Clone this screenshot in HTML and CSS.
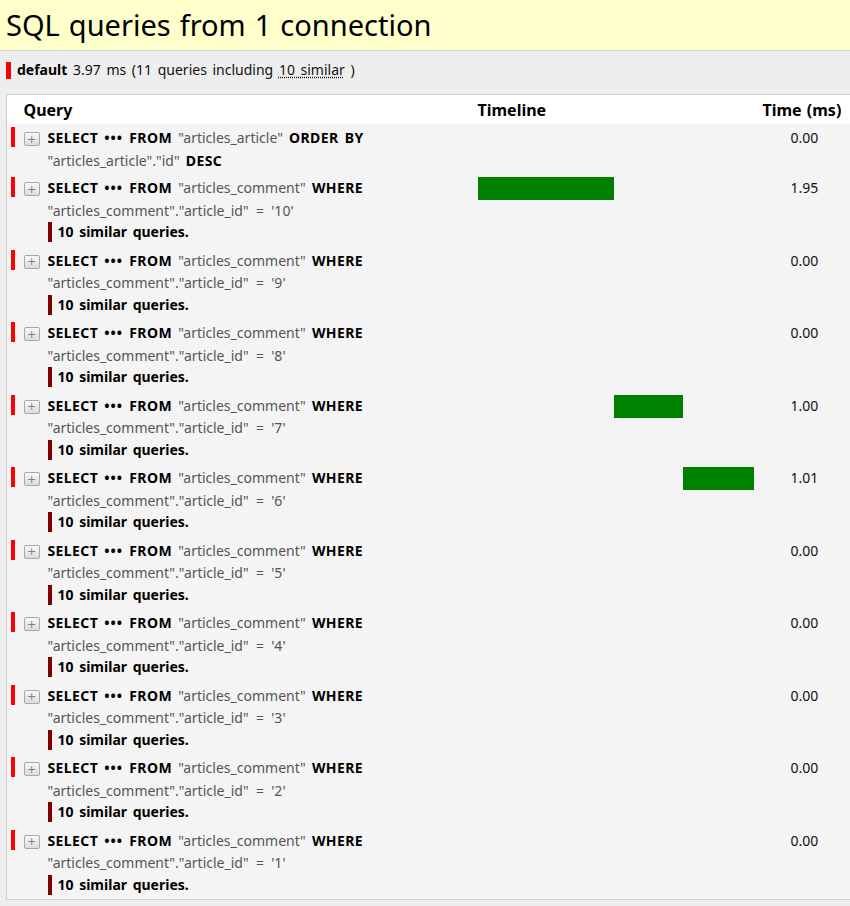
FILE: index.html
```html
<!DOCTYPE html>
<html lang="en">
<head>
<meta charset="utf-8">
<title>SQL queries</title>
<link rel="stylesheet" href="styles.css">
</head>
<body>
<div class="panel">
  <div class="panel-title">
    <h3>SQL queries from 1 connection</h3>
  </div>
  <div class="panel-content">
    <div class="conn"><span class="conn-swatch"></span><strong>default</strong> 3.97 ms (11 queries including <abbr title="Similar queries">10 similar</abbr> )</div>
    <table class="sql">
      <colgroup>
        <col class="c-color">
        <col class="c-toggle">
        <col class="c-query">
        <col class="c-timeline">
        <col class="c-time">
      </colgroup>
      <thead>
        <tr>
          <th></th>
          <th colspan="2" class="th-query">Query</th>
          <th class="th-timeline">Timeline</th>
          <th class="th-time">Time (ms)</th>
        </tr>
      </thead>
      <tbody>
        <tr>
          <td class="color"><span class="swatch"></span></td>
          <td class="toggle"><button class="tog" type="button">+</button></td>
          <td class="query"><div class="sqltext"><b>SELECT</b> <b class="dots">•••</b> <b>FROM</b> <span class="s">"articles_article"</span> <b>ORDER</b> <b>BY</b> <span class="s">"articles_article"."id"</span> <b>DESC</b></div></td>
          <td class="timeline"></td>
          <td class="time">0.00</td>
        </tr>
        <tr>
          <td class="color"><span class="swatch"></span></td>
          <td class="toggle"><button class="tog" type="button">+</button></td>
          <td class="query"><div class="sqltext"><b>SELECT</b> <b class="dots">•••</b> <b>FROM</b> <span class="s">"articles_comment"</span> <b>WHERE</b> <span class="s">"articles_comment"."article_id"&nbsp; = &nbsp;'10'</span></div><div class="similar">10 similar queries.</div></td>
          <td class="timeline"><div class="bar" style="margin-left:0%;width:49.12%"></div></td>
          <td class="time">1.95</td>
        </tr>
        <tr>
          <td class="color"><span class="swatch"></span></td>
          <td class="toggle"><button class="tog" type="button">+</button></td>
          <td class="query"><div class="sqltext"><b>SELECT</b> <b class="dots">•••</b> <b>FROM</b> <span class="s">"articles_comment"</span> <b>WHERE</b> <span class="s">"articles_comment"."article_id"&nbsp; = &nbsp;'9'</span></div><div class="similar">10 similar queries.</div></td>
          <td class="timeline"></td>
          <td class="time">0.00</td>
        </tr>
        <tr>
          <td class="color"><span class="swatch"></span></td>
          <td class="toggle"><button class="tog" type="button">+</button></td>
          <td class="query"><div class="sqltext"><b>SELECT</b> <b class="dots">•••</b> <b>FROM</b> <span class="s">"articles_comment"</span> <b>WHERE</b> <span class="s">"articles_comment"."article_id"&nbsp; = &nbsp;'8'</span></div><div class="similar">10 similar queries.</div></td>
          <td class="timeline"></td>
          <td class="time">0.00</td>
        </tr>
        <tr>
          <td class="color"><span class="swatch"></span></td>
          <td class="toggle"><button class="tog" type="button">+</button></td>
          <td class="query"><div class="sqltext"><b>SELECT</b> <b class="dots">•••</b> <b>FROM</b> <span class="s">"articles_comment"</span> <b>WHERE</b> <span class="s">"articles_comment"."article_id"&nbsp; = &nbsp;'7'</span></div><div class="similar">10 similar queries.</div></td>
          <td class="timeline"><div class="bar" style="margin-left:49.12%;width:25.19%"></div></td>
          <td class="time">1.00</td>
        </tr>
        <tr>
          <td class="color"><span class="swatch"></span></td>
          <td class="toggle"><button class="tog" type="button">+</button></td>
          <td class="query"><div class="sqltext"><b>SELECT</b> <b class="dots">•••</b> <b>FROM</b> <span class="s">"articles_comment"</span> <b>WHERE</b> <span class="s">"articles_comment"."article_id"&nbsp; = &nbsp;'6'</span></div><div class="similar">10 similar queries.</div></td>
          <td class="timeline"><div class="bar" style="margin-left:74.31%;width:25.44%"></div></td>
          <td class="time">1.01</td>
        </tr>
        <tr>
          <td class="color"><span class="swatch"></span></td>
          <td class="toggle"><button class="tog" type="button">+</button></td>
          <td class="query"><div class="sqltext"><b>SELECT</b> <b class="dots">•••</b> <b>FROM</b> <span class="s">"articles_comment"</span> <b>WHERE</b> <span class="s">"articles_comment"."article_id"&nbsp; = &nbsp;'5'</span></div><div class="similar">10 similar queries.</div></td>
          <td class="timeline"></td>
          <td class="time">0.00</td>
        </tr>
        <tr>
          <td class="color"><span class="swatch"></span></td>
          <td class="toggle"><button class="tog" type="button">+</button></td>
          <td class="query"><div class="sqltext"><b>SELECT</b> <b class="dots">•••</b> <b>FROM</b> <span class="s">"articles_comment"</span> <b>WHERE</b> <span class="s">"articles_comment"."article_id"&nbsp; = &nbsp;'4'</span></div><div class="similar">10 similar queries.</div></td>
          <td class="timeline"></td>
          <td class="time">0.00</td>
        </tr>
        <tr>
          <td class="color"><span class="swatch"></span></td>
          <td class="toggle"><button class="tog" type="button">+</button></td>
          <td class="query"><div class="sqltext"><b>SELECT</b> <b class="dots">•••</b> <b>FROM</b> <span class="s">"articles_comment"</span> <b>WHERE</b> <span class="s">"articles_comment"."article_id"&nbsp; = &nbsp;'3'</span></div><div class="similar">10 similar queries.</div></td>
          <td class="timeline"></td>
          <td class="time">0.00</td>
        </tr>
        <tr>
          <td class="color"><span class="swatch"></span></td>
          <td class="toggle"><button class="tog" type="button">+</button></td>
          <td class="query"><div class="sqltext"><b>SELECT</b> <b class="dots">•••</b> <b>FROM</b> <span class="s">"articles_comment"</span> <b>WHERE</b> <span class="s">"articles_comment"."article_id"&nbsp; = &nbsp;'2'</span></div><div class="similar">10 similar queries.</div></td>
          <td class="timeline"></td>
          <td class="time">0.00</td>
        </tr>
        <tr>
          <td class="color"><span class="swatch"></span></td>
          <td class="toggle"><button class="tog" type="button">+</button></td>
          <td class="query"><div class="sqltext"><b>SELECT</b> <b class="dots">•••</b> <b>FROM</b> <span class="s">"articles_comment"</span> <b>WHERE</b> <span class="s">"articles_comment"."article_id"&nbsp; = &nbsp;'1'</span></div><div class="similar">10 similar queries.</div></td>
          <td class="timeline"></td>
          <td class="time">0.00</td>
        </tr>
      </tbody>
    </table>
  </div>
</div>
</body>
</html>
```

FILE: styles.css
```css
html, body {
  margin: 0;
  padding: 0;
  overflow: hidden;
  background: #eeeeee;
}

body {
  font-family: "Noto Sans", "Open Sans", "Noto Sans CJK KR", sans-serif;
  color: #000;
  font-size: 14px;
}

.panel-title {
  background: #ffffcc;
  border-bottom: 1px solid #d6d6d6;
  height: 51px;
  box-sizing: border-box;
}

.panel-title h3 {
  margin: 0;
  padding: 0 6px;
  font-size: 29px;
  font-weight: normal;
  line-height: 50px;
  word-spacing: 1.5px;
  white-space: nowrap;
}

.panel-content {
  background: #eeeeee;
  padding: 9px 0 0 6px;
}

.conn {
  height: 19px;
  line-height: 19px;
  color: #111;
  margin-bottom: 15px;
  word-spacing: 2px;
  white-space: nowrap;
}

.conn strong {
  font-weight: bold;
  color: #000;
}

.conn-swatch {
  display: inline-block;
  width: 5px;
  height: 17px;
  background: #ff0000;
  margin-right: 6px;
  vertical-align: -4px;
}

.conn abbr {
  text-decoration: underline dotted;
  text-underline-offset: 2px;
}

table.sql {
  border-collapse: collapse;
  table-layout: fixed;
  width: 880px;
  border: 1px solid #cccccc;
  background: #f4f4f4;
}

col.c-color { width: 13px; }
col.c-toggle { width: 24px; }
col.c-query { width: 430px; }
col.c-timeline { width: 285px; }
col.c-time { width: 128px; }

table.sql th {
  background: #ffffff;
  text-align: left;
  font-weight: bold;
  font-size: 16px;
  line-height: 23px;
  padding: 4px 4px 2px 4px;
  white-space: nowrap;
  word-spacing: 1px;
}

table.sql td {
  vertical-align: top;
  padding: 3px 4px 2px 4px;
  line-height: 22.5px;
}

table.sql td.color {
  padding-right: 5px;
}

.swatch {
  display: block;
  width: 4px;
  height: 20px;
  background: #ff0000;
}

.tog {
  display: block;
  width: 16px;
  height: 14px;
  margin-top: 5px;
  padding: 0;
  border: 1px solid #a8a8a8;
  border-radius: 2px;
  background: linear-gradient(#f8f8f8, #dcdcdc);
  color: #808080;
  font-family: "DejaVu Sans", sans-serif;
  font-size: 11px;
  line-height: 11px;
  text-align: center;
}

.sqltext {
  word-spacing: 2.5px;
}

.sqltext b {
  font-weight: bold;
  color: #000;
  letter-spacing: 0.4px;
}

.sqltext .dots {
  letter-spacing: 1px;
}

.sqltext .s {
  color: #555555;
  word-spacing: 0;
  letter-spacing: 0;
}

.similar {
  border-left: 4px solid #800000;
  padding-left: 6px;
  line-height: 20px;
  margin-bottom: 2.5px;
  font-weight: bold;
  color: #000;
  word-spacing: 2px;
}

table.sql td.timeline {
  padding-right: 4px;
}

.bar {
  height: 23px;
  background: #008000;
}

table.sql td.time {
  padding-left: 32px;
  color: #111;
}
```
